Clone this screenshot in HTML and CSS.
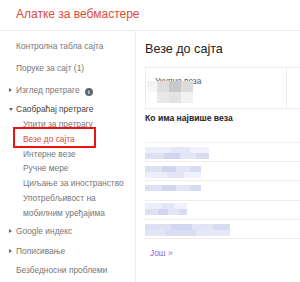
FILE: index.html
```html
<!DOCTYPE html>
<html lang="sr">
<head>
  <meta charset="UTF-8">
  <title>Алатке за вебмастере</title>
  <link rel="stylesheet" href="styles.css">
</head>
<body>
  <div class="page">
    <div class="top-bar">
      <span class="app-title">Алатке за вебмастере</span>
    </div>
    <div class="layout">
      <div class="sidebar">
        <div class="nav-item">Контролна табла сајта</div>
        <div class="nav-item">Поруке за сајт (1)</div>
        <div class="nav-item nav-short">
          <span class="arrow-right"></span>Изглед претраге <span class="info-icon">i</span>
        </div>
        <div class="nav-item nav-open">
          <span class="arrow-down"></span>Саобраћај претраге
        </div>
        <div class="sub-list">
          <div class="sub-item">Упити за претрагу</div>
          <div class="sub-item active">Везе до сајта</div>
          <div class="sub-item">Интерне везе</div>
          <div class="sub-item">Ручне мере</div>
          <div class="sub-item">Циљање за иностранство</div>
          <div class="sub-item">Употребљивост на мобилним уређајима</div>
          <div class="highlight-box"></div>
        </div>
        <div class="nav-item nav-google"><span class="arrow-right"></span>Google индекс</div>
        <div class="nav-item nav-short"><span class="arrow-right"></span>Пописивање</div>
        <div class="nav-item">Безбедносни проблеми</div>
      </div>

      <div class="main">
        <h1 class="page-title">Везе до сајта</h1>
        <div class="stats-row">
          <div class="stat-card">
            <div class="stat-label">Укупно веза</div>
            <div class="blur-num">
              <span class="px p1"></span><span class="px p2"></span><span class="px p3"></span><span class="px p4"></span>
            </div>
          </div>
          <div class="stat-card next"></div>
        </div>

        <h2 class="section-title">Ко има највише веза</h2>
        <div class="link-list">
          <div class="link-row"><div class="blur light" style="width: 64px"></div><div class="blur" style="width: 64px"></div></div>
          <div class="link-row"><div class="blur" style="width: 56px"></div><div class="blur light" style="width: 56px"></div></div>
          <div class="link-row"><div class="blur" style="width: 56px"></div></div>
          <div class="link-row tight"><div class="blur light" style="width: 42px"></div><div class="blur" style="width: 42px"></div></div>
          <div class="link-row"><div class="blur" style="width: 85px"></div><div class="blur mid" style="width: 85px"></div></div>
        </div>
        <a class="more-link" href="#">Још »</a>
      </div>
    </div>
  </div>
</body>
</html>
```

FILE: styles.css
```css
* { margin: 0; padding: 0; box-sizing: border-box; }
body { font-family: 'Liberation Sans', Arial, sans-serif; background: #fff; width: 300px; height: 282px; overflow: hidden; }

.top-bar { height: 31px; border-bottom: 1px solid #ebebeb; padding: 4px 0 0 16px; }
.app-title { color: #dd4b39; font-size: 12px; line-height: 20px; }

.layout { display: flex; height: 251px; overflow: hidden; }

.sidebar { width: 136px; flex: none; border-right: 1px solid #ebebeb; padding-top: 8px; font-size: 8.4px; color: #777; }
.nav-item { height: 22px; line-height: 14px; padding-left: 16px; position: relative; }
.nav-item.nav-short { height: 19px; }
.nav-item.nav-google { height: 20px; }
.nav-item.nav-open { color: #444; height: 15px; }
.arrow-right, .arrow-down { position: absolute; left: 9px; top: 5px; width: 0; height: 0; }
.arrow-right { border-left: 3px solid #666; border-top: 2.5px solid transparent; border-bottom: 2.5px solid transparent; }
.arrow-down { border-top: 3px solid #666; border-left: 2.5px solid transparent; border-right: 2.5px solid transparent; top: 6px; }
.info-icon { display: inline-block; width: 8px; height: 8px; border-radius: 50%; background: #666; color: #fff; font-size: 6px; font-weight: bold; line-height: 8px; text-align: center; margin-left: 3px; vertical-align: -1px; }

.sub-list { position: relative; padding-bottom: 3px; }
.sub-item { padding-left: 23px; padding-right: 10px; line-height: 14.8px; color: #777; }
.sub-item.active { color: #dd4b39; }
.highlight-box { position: absolute; left: 13px; top: 10px; width: 83px; height: 21px; border: 2px solid #ee1111; }

.main { flex: 1; padding: 10px 0 0 9px; overflow: hidden; }
.page-title { font-size: 12.6px; font-weight: normal; color: #222; line-height: 16px; margin-bottom: 10px; }

.stats-row { display: flex; height: 42px; }
.stat-card { width: 142px; flex: none; border: 1px solid #ebebeb; padding: 8px 0 0 9px; position: relative; }
.stat-card.next { width: 20px; border-right: none; border-left: none; }
.stat-label { font-size: 8.4px; color: #555; line-height: 10px; }
.blur-num { position: absolute; left: 1px; top: 13px; display: flex; }
.px { display: block; width: 12px; height: 22px; }
.p1 { background: linear-gradient(#f1f1f1, #f7f7f7); width: 10px; height: 11px; }
.p2 { background: linear-gradient(#dedede 50%, #e8e8e8 50%); }
.p3 { background: linear-gradient(#c9c9c9 50%, #e3e3e3 50%); }
.p4 { background: linear-gradient(#dcdcdc 50%, #f1f1f1 50%); }

.section-title { font-size: 8.6px; font-weight: bold; color: #222; margin-top: 4px; line-height: 10px; }
.link-list { margin-top: 19px; border-top: 1px solid #f1f1f1; }
.link-row { height: 19.2px; border-bottom: 1px solid #ededed; padding-top: 4px; }
.link-row.tight { padding-top: 2px; }
.blur { height: 6px; background: linear-gradient(90deg, #dde1f4 0 30%, #d0d6f0 30% 55%, #e2e5f5 55% 80%, #d8dcf2 80%); }
.blur.light { background: linear-gradient(90deg, #eceef9 0 40%, #e3e6f6 40% 70%, #f0f1fa 70%); }
.blur.mid { background: linear-gradient(90deg, #e2e5f5 0 25%, #d9ddf3 25% 60%, #e6e8f7 60%); }
.more-link { display: inline-block; margin: 9px 0 0 5px; color: #8c6ad6; font-size: 8.4px; text-decoration: none; }
```
